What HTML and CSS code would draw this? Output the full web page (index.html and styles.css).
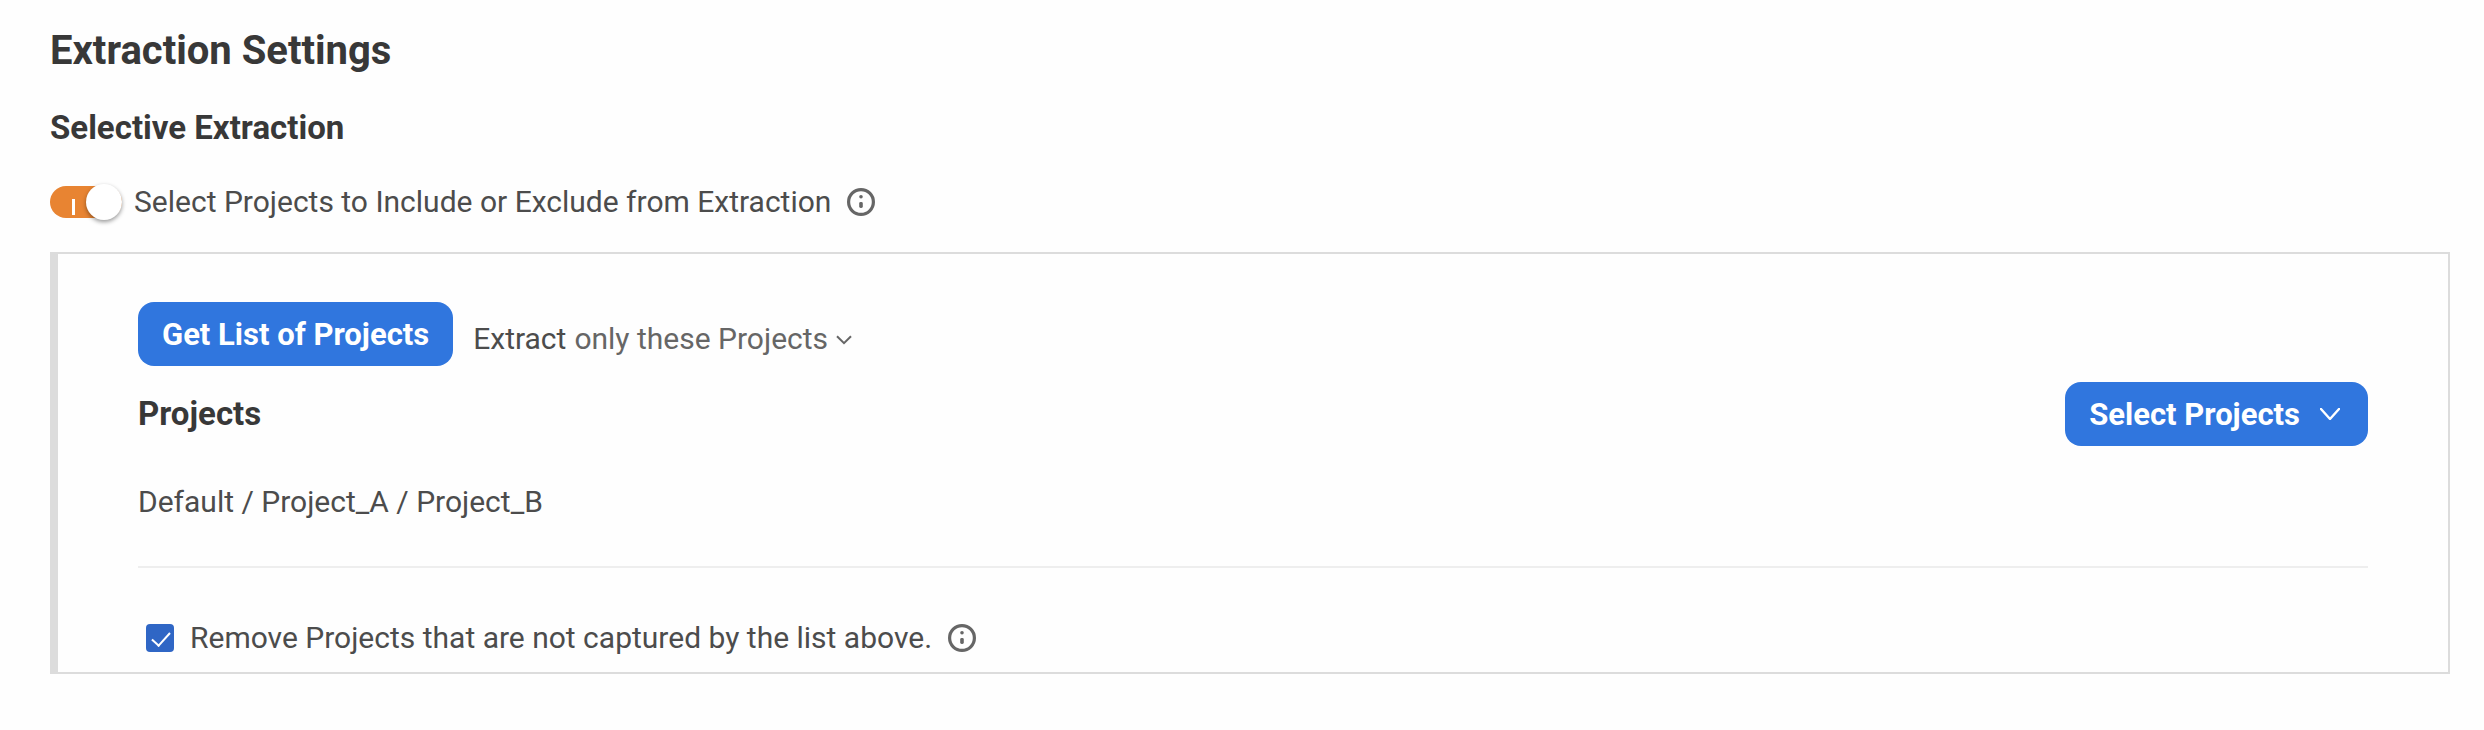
FILE: index.html
```
<!DOCTYPE html>
<html lang="en">
<head>
  <meta charset="utf-8">
  <title>Extraction Settings</title>
  <link rel="stylesheet" href="styles.css">
</head>
<body>
  <main class="settings">
    <h1>Extraction Settings</h1>
    <h2>Selective Extraction</h2>

    <div class="toggle-row">
      <input type="checkbox" role="switch" class="toggle" id="selective" checked>
      <label for="selective">Select Projects to Include or Exclude from Extraction</label>
      <svg class="info-icon" viewBox="0 0 28 28">
        <circle cx="14" cy="14" r="12.4" fill="none" stroke="#666" stroke-width="3.2"/>
        <circle cx="14" cy="8.8" r="1.8" fill="#666"/>
        <rect x="12.2" y="14" width="3.6" height="6" rx="1.4" fill="#666"/>
      </svg>
    </div>

    <section class="panel">
      <div class="extract-row">
        <button type="button" class="btn">Get List of Projects</button>
        <div class="extract-mode">
          <label for="mode">Extract</label>
          <div class="mode-select">
            <select id="mode">
              <option>only these Projects</option>
              <option>all except these Projects</option>
            </select>
            <svg class="mode-arrow" viewBox="0 0 16 10">
              <path d="M1 1.2 L8 8.2 L15 1.2" fill="none" stroke="#666" stroke-width="2"/>
            </svg>
          </div>
        </div>
      </div>

      <div class="projects-row">
        <h3>Projects</h3>
        <button type="button" class="btn">
          Select Projects
          <svg class="btn-arrow" viewBox="0 0 20 12">
            <path d="M1 1 L10 11 L19 1" fill="none" stroke="#fff" stroke-width="2.4" stroke-linecap="round" stroke-linejoin="round"/>
          </svg>
        </button>
      </div>

      <p class="project-list">Default / Project_A / Project_B</p>

      <div class="remove-row">
        <input type="checkbox" class="check" id="remove" checked>
        <label for="remove">Remove Projects that are not captured by the list above.</label>
        <svg class="info-icon" viewBox="0 0 28 28">
          <circle cx="14" cy="14" r="12.4" fill="none" stroke="#666" stroke-width="3.2"/>
          <circle cx="14" cy="8.8" r="1.8" fill="#666"/>
          <rect x="12.2" y="14" width="3.6" height="6" rx="1.4" fill="#666"/>
        </svg>
      </div>
    </section>
  </main>
</body>
</html>
```

FILE: styles.css
```
* {
  box-sizing: border-box;
}

body {
  margin: 0;
  background-color: #fefefe;
  color: #4c4c4c;
  font-family: Roboto, "Liberation Sans", sans-serif;
  font-size: 30px;
  line-height: 40px;
}

.settings {
  padding: 24px 34px 56px 50px;
}

h1,
h2,
h3,
p {
  margin: 0;
}

h1,
h2,
h3 {
  color: #383838;
  font-weight: bold;
}

h1 {
  font-size: 40px;
  line-height: 54px;
}

h2,
h3 {
  font-size: 33px;
}

h2 {
  margin-top: 30px;
}

.toggle-row {
  display: flex;
  align-items: center;
  margin-top: 34px;
}

.toggle {
  appearance: none;
  position: relative;
  width: 72px;
  height: 32px;
  margin: 0 12px 0 0;
  border-radius: 16px;
  background-color: #e88432;
}

.toggle::before {
  content: "";
  position: absolute;
  left: 22px;
  top: 13px;
  width: 3px;
  height: 16px;
  background-color: #fff;
}

.toggle::after {
  content: "";
  position: absolute;
  right: 0;
  top: -2px;
  width: 36px;
  height: 36px;
  border-radius: 50%;
  background-color: #fff;
  box-shadow: 0 2px 4px rgba(0, 0, 0, 0.4);
}

.info-icon {
  width: 28px;
  height: 28px;
  margin-left: 16px;
}

.panel {
  margin-top: 30px;
  padding: 48px 80px 14px;
  border: 2px solid #dcdcdc;
  border-left-width: 8px;
}

.extract-row {
  display: flex;
  align-items: center;
  gap: 20px;
}

.btn {
  display: flex;
  align-items: center;
  height: 64px;
  padding: 0 24px;
  border: none;
  border-radius: 16px;
  background-color: #3076de;
  color: #fff;
  font-family: inherit;
  font-size: 31px;
  font-weight: bold;
  cursor: pointer;
}

.btn-arrow {
  width: 20px;
  height: 12px;
  margin: 0 4px 0 20px;
}

.extract-mode {
  display: flex;
  align-items: center;
  gap: 8px;
  padding-top: 10px;
}

.mode-select {
  position: relative;
  color: #666;
}

.mode-select select {
  appearance: none;
  field-sizing: content;
  height: 40px;
  padding: 0 24px 0 0;
  border: none;
  background: none;
  color: inherit;
  font: inherit;
}

.mode-arrow {
  position: absolute;
  right: 0;
  top: 16px;
  width: 16px;
  height: 10px;
  pointer-events: none;
}

.projects-row {
  display: flex;
  align-items: center;
  justify-content: space-between;
  margin-top: 16px;
}

.project-list {
  padding: 36px 0 44px;
  border-bottom: 2px solid #eee;
}

.remove-row {
  display: flex;
  align-items: center;
  padding-left: 8px;
  margin-top: 50px;
}

.check {
  appearance: none;
  position: relative;
  width: 28px;
  height: 28px;
  margin: 0 16px 0 0;
  border-radius: 4px;
  background-color: #2f66c5;
}

.check::after {
  content: "";
  position: absolute;
  left: 10px;
  top: 4px;
  width: 8px;
  height: 16px;
  border: solid #fff;
  border-width: 0 2px 2px 0;
  transform: rotate(42deg);
}
```
